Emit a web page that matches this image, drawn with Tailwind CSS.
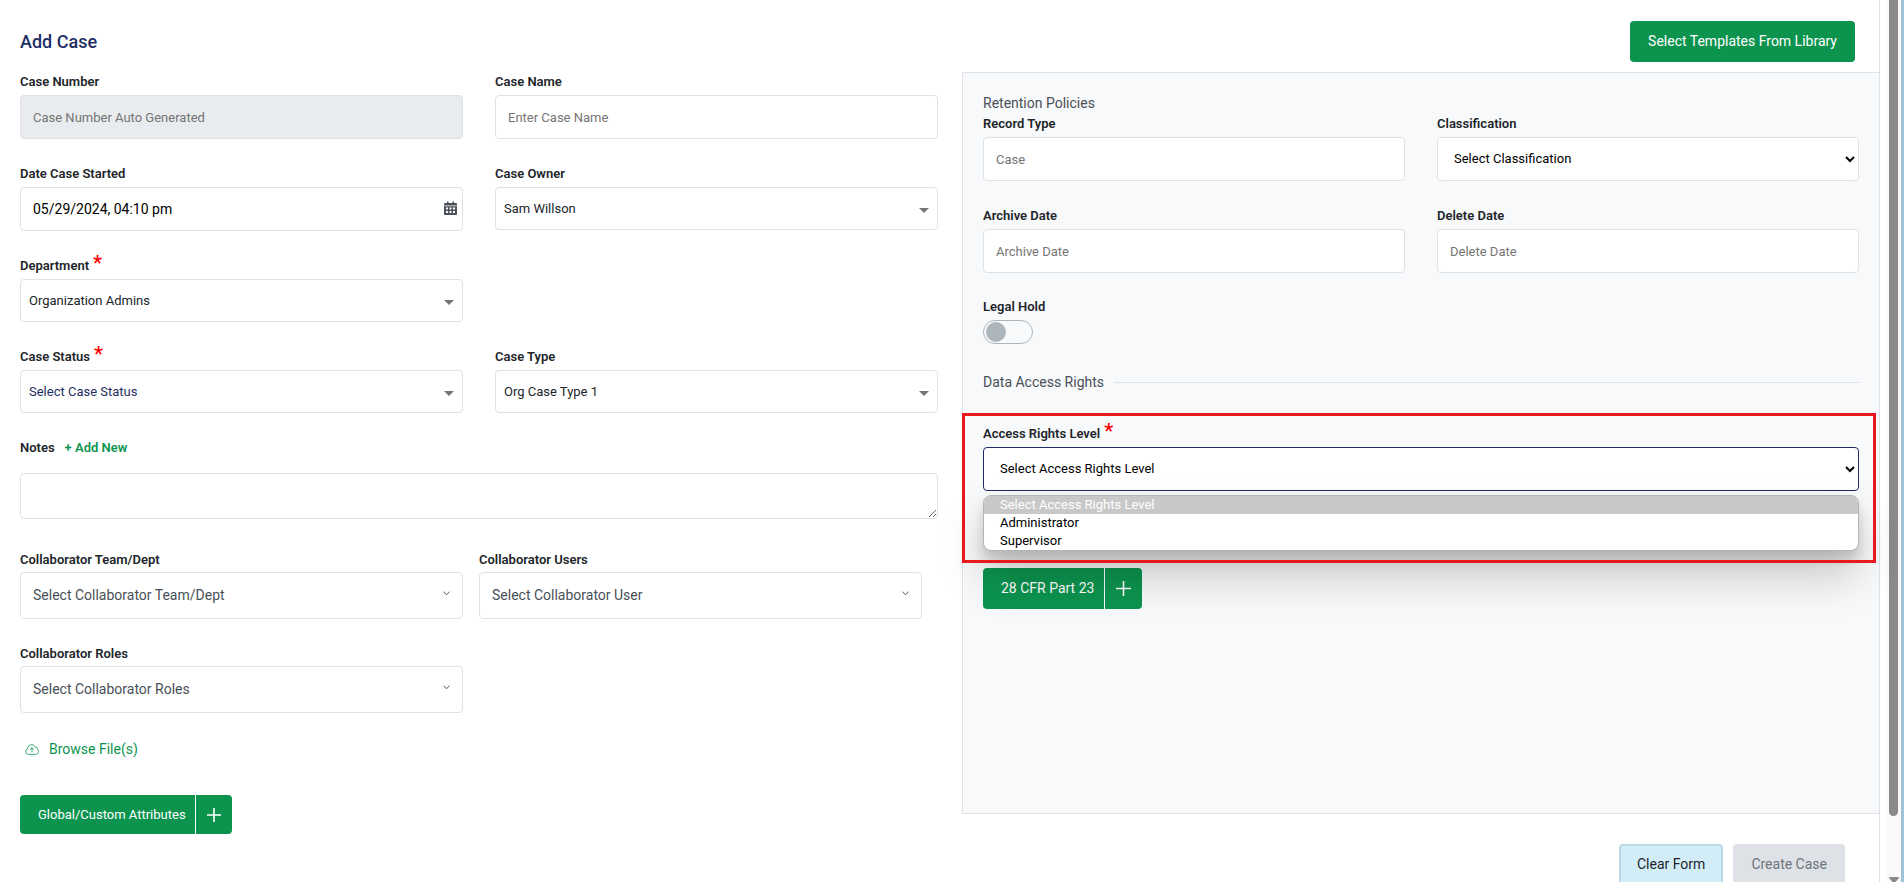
<!DOCTYPE html>
<html lang="en">
<head>
<meta charset="utf-8">
<title>Add Case</title>
<script src="https://cdn.jsdelivr.net/npm/@tailwindcss/browser@4"></script>
</head>
<body class="flex h-screen overflow-hidden bg-white font-[Roboto,'Open_Sans',sans-serif] text-[14px] text-[#212529]">
  <main class="min-w-0 flex-1">
    <header class="flex items-center justify-between pt-[21px] pr-6 pl-5">
      <h1 class="text-[18px] font-medium text-[#1f2f66]">Add Case</h1>
      <button type="button" class="h-[41px] rounded bg-[#0c944f] px-[18px] text-[14px] text-white">Select Templates From Library</button>
    </header>

    <form class="mt-2.5" onsubmit="return false">
      <div class="-mr-px grid grid-cols-2 items-start gap-6 pl-5">
        <div class="min-w-0">
          <div class="grid grid-cols-2 gap-x-8 gap-y-[25px]">
            <div>
              <label for="case-number" class="block pb-[3px] text-[13px] leading-[20px] font-semibold">Case Number</label>
              <input id="case-number" disabled placeholder="Case Number Auto Generated" class="block h-11 w-full rounded border border-[#dee2e6] bg-[#e9ecef] px-3 text-[13px] placeholder:text-[#757575]">
            </div>
            <div>
              <label for="case-name" class="block pb-[3px] text-[13px] leading-[20px] font-semibold">Case Name</label>
              <input id="case-name" placeholder="Enter Case Name" class="block h-11 w-full rounded border border-[#dee2e6] px-3 text-[13px] placeholder:text-[#757575]">
            </div>
            <div>
              <label for="date-started" class="block pb-[3px] text-[13px] leading-[20px] font-semibold">Date Case Started</label>
              <div class="relative">
                <input id="date-started" value="05/29/2024, 04:10 pm" class="block h-11 w-full rounded border border-[#dee2e6] px-3 text-black">
                <svg class="pointer-events-none absolute top-[14px] right-[6px] h-[14px] w-[13px]" viewBox="0 0 13 14" fill="#495057"><path d="M1 2h2V.5h1.500V2h4V.5H10V2h2a1 1 0 0 1 1 1v1.500H0V3a1 1 0 0 1 1-1z"/><path fill-rule="evenodd" d="M0 5.300h13V13a1 1 0 0 1-1 1H1a1 1 0 0 1-1-1zM2 6.500v2h2v-2zm3.500 0v2h2v-2zm3.500 0v2h2v-2zM2 10v2h2v-2zm3.500 0v2h2v-2zm3.500 0v2h2v-2z"/></svg>
              </div>
            </div>
            <div>
              <label for="case-owner" class="block pb-[3px] text-[13px] leading-[20px] font-semibold">Case Owner</label>
              <div class="relative">
                <select id="case-owner" class="block h-[43px] w-full appearance-none rounded border border-[#dee2e6] px-2 text-[13px]"><option>Sam Willson</option></select>
                <svg class="pointer-events-none absolute top-[21px] right-[9px] h-[5px] w-[10px]" viewBox="0 0 10 5" fill="#757575"><path d="M0 0h10L5 5z"/></svg>
              </div>
            </div>
            <div class="col-start-1">
              <label for="department" class="flex pb-[3px] text-[13px] leading-[20px] font-semibold">Department<span class="h-5 pl-1 text-[20px] leading-[14px] text-[#ff0000]">*</span></label>
              <div class="relative">
                <select id="department" class="block h-[43px] w-full appearance-none rounded border border-[#dee2e6] px-2 text-[13px]"><option>Organization Admins</option></select>
                <svg class="pointer-events-none absolute top-[21px] right-[9px] h-[5px] w-[10px]" viewBox="0 0 10 5" fill="#757575"><path d="M0 0h10L5 5z"/></svg>
              </div>
            </div>
            <div class="col-start-1">
              <label for="case-status" class="flex pb-[3px] text-[13px] leading-[20px] font-semibold">Case Status<span class="h-5 pl-1 text-[20px] leading-[14px] text-[#ff0000]">*</span></label>
              <div class="relative">
                <select id="case-status" class="block h-[43px] w-full appearance-none rounded border border-[#dee2e6] px-2 text-[13px] text-[#1f2f66]"><option>Select Case Status</option></select>
                <svg class="pointer-events-none absolute top-[21px] right-[9px] h-[5px] w-[10px]" viewBox="0 0 10 5" fill="#757575"><path d="M0 0h10L5 5z"/></svg>
              </div>
            </div>
            <div>
              <label for="case-type" class="block pb-[3px] text-[13px] leading-[20px] font-semibold">Case Type</label>
              <div class="relative">
                <select id="case-type" class="block h-[43px] w-full appearance-none rounded border border-[#dee2e6] px-2 text-[13px]"><option>Org Case Type 1</option></select>
                <svg class="pointer-events-none absolute top-[21px] right-[9px] h-[5px] w-[10px]" viewBox="0 0 10 5" fill="#757575"><path d="M0 0h10L5 5z"/></svg>
              </div>
            </div>
          </div>

          <div class="mt-6 flex items-center gap-2.5 text-[13px] leading-[22px] font-semibold">
            <label for="notes">Notes</label>
            <button type="button" class="text-[#0c944f]">+ Add New</button>
          </div>
          <textarea id="notes" class="mt-3.5 block h-[46px] w-full resize-y rounded border border-[#dee2e6] px-3 py-2"></textarea>

          <div class="mt-[30px] grid grid-cols-2 gap-x-4 gap-y-6 pr-4">
            <div>
              <label for="collab-team" class="block pb-px text-[13px] leading-[22px] font-semibold">Collaborator Team/Dept</label>
              <div class="relative">
                <select id="collab-team" class="block h-[47px] w-full appearance-none rounded border border-[#dee2e6] px-3 text-[14px] text-[#495057]"><option>Select Collaborator Team/Dept</option></select>
                <svg class="pointer-events-none absolute top-[19px] right-[13px] h-[5px] w-[7px]" viewBox="0 0 7 5" fill="none" stroke="#495057"><path d="M.4.600l3.100 3.200L6.600.600"/></svg>
              </div>
            </div>
            <div>
              <label for="collab-users" class="block pb-px text-[13px] leading-[22px] font-semibold">Collaborator Users</label>
              <div class="relative">
                <select id="collab-users" class="block h-[47px] w-full appearance-none rounded border border-[#dee2e6] px-3 text-[14px] text-[#495057]"><option>Select Collaborator User</option></select>
                <svg class="pointer-events-none absolute top-[19px] right-[13px] h-[5px] w-[7px]" viewBox="0 0 7 5" fill="none" stroke="#495057"><path d="M.4.600l3.100 3.200L6.600.600"/></svg>
              </div>
            </div>
            <div>
              <label for="collab-roles" class="block pb-px text-[13px] leading-[22px] font-semibold">Collaborator Roles</label>
              <div class="relative">
                <select id="collab-roles" class="block h-[47px] w-full appearance-none rounded border border-[#dee2e6] px-3 text-[14px] text-[#495057]"><option>Select Collaborator Roles</option></select>
                <svg class="pointer-events-none absolute top-[19px] right-[13px] h-[5px] w-[7px]" viewBox="0 0 7 5" fill="none" stroke="#495057"><path d="M.4.600l3.100 3.200L6.600.600"/></svg>
              </div>
            </div>
          </div>

          <button type="button" class="mt-[25px] flex items-center gap-2.5 pl-[5px] text-[14px] leading-[22px] text-[#0c944f]">
            <svg class="h-[11px] w-[14px]" viewBox="0 0 14 11" fill="none" stroke="#0c944f" stroke-width=".8" stroke-linecap="round" stroke-linejoin="round"><path d="M3.200 10.300a2.700 2.700 0 0 1-.6-5.300C2.600 2.600 4.300.700 6.600.700c1.700 0 3 .9 3.600 2.300 1.500 0 2.400 1 2.300 2.400.8.500 1.100 1.300 1.100 2.200 0 1.500-1 2.700-2.500 2.700z"/><path d="M7 8V4M5.300 5.500L7 3.800l1.700 1.700"/></svg>
            Browse File(s)
          </button>

          <div class="mt-[35px] flex h-[39px] gap-px text-white">
            <button type="button" class="rounded-l bg-[#0c944f] pr-[9px] pl-[18px] text-[13px]">Global/Custom Attributes</button>
            <button type="button" aria-label="Add attribute" class="flex w-9 items-center justify-center rounded-r bg-[#0c944f]"><svg class="size-[14px]" viewBox="0 0 14 14" stroke="#fff" stroke-width="1.600"><path d="M7 0v14M0 7h14"/></svg></button>
          </div>
        </div>

        <section class="relative min-w-0 border border-[#dee2e6] bg-[#f8f9fb] px-5 pt-5 pb-[204px]">
          <h2 class="text-[14px] leading-[21px] text-[#495057]">Retention Policies</h2>
          <div class="grid grid-cols-2 gap-x-8 gap-y-[25px]">
            <div>
              <label for="record-type" class="block pb-[3px] text-[13px] leading-[20px] font-semibold">Record Type</label>
              <input id="record-type" placeholder="Case" class="block h-11 w-full rounded border border-[#dee2e6] bg-white px-3 text-[13px] placeholder:text-[#757575]">
            </div>
            <div>
              <label for="classification" class="block pb-[3px] text-[13px] leading-[20px] font-semibold">Classification</label>
              <div class="relative">
                <select id="classification" class="block h-11 w-full appearance-none rounded border border-[#dee2e6] bg-white px-4 text-[13px] text-black"><option>Select Classification</option></select>
                <svg class="pointer-events-none absolute top-[19px] right-1 h-[7px] w-[10px]" viewBox="0 0 10 7" fill="none" stroke="#000" stroke-width="2"><path d="M1 1l4 4 4-4"/></svg>
              </div>
            </div>
            <div>
              <label for="archive-date" class="block pb-[3px] text-[13px] leading-[20px] font-semibold">Archive Date</label>
              <input id="archive-date" placeholder="Archive Date" class="block h-11 w-full rounded border border-[#dee2e6] bg-white px-3 text-[13px] placeholder:text-[#757575]">
            </div>
            <div>
              <label for="delete-date" class="block pb-[3px] text-[13px] leading-[20px] font-semibold">Delete Date</label>
              <input id="delete-date" placeholder="Delete Date" class="block h-11 w-full rounded border border-[#dee2e6] bg-white px-3 text-[13px] placeholder:text-[#757575]">
            </div>
          </div>

          <div class="mt-6">
            <label for="legal-hold" class="block pb-[3px] text-[13px] leading-[20px] font-semibold">Legal Hold</label>
            <input id="legal-hold" type="checkbox" role="switch" class="flex h-6 w-[50px] appearance-none items-center rounded-full border border-[#adb5bd] px-0.5 before:block before:size-5 before:rounded-full before:bg-[#adb5bd] checked:justify-end">
          </div>

          <div class="mt-7 flex items-center gap-2.5">
            <h2 class="text-[14px] leading-[21px] text-[#495057]">Data Access Rights</h2>
            <hr class="flex-1 border-[#dee2e6]">
          </div>

          <div class="relative mt-[31px]">
            <label for="access-level" class="flex pb-[3px] text-[13px] leading-[20px] font-semibold">Access Rights Level<span class="h-5 pl-1 text-[20px] leading-[14px] text-[#ff0000]">*</span></label>
            <div class="relative">
              <select id="access-level" class="block h-11 w-full appearance-none rounded border border-[#1f2a66] bg-white px-4 text-[13px] text-black"><option>Select Access Rights Level</option><option>Administrator</option><option>Supervisor</option></select>
              <svg class="pointer-events-none absolute top-[19px] right-1 h-[7px] w-[10px]" viewBox="0 0 10 7" fill="none" stroke="#000" stroke-width="2"><path d="M1 1l4 4 4-4"/></svg>
              <!-- open option list -->
              <ul role="listbox" aria-label="Access Rights Level" class="absolute inset-x-0 top-12 z-10 overflow-hidden rounded-lg border border-[#b4b4b4] bg-white text-[13px] leading-[18px] text-black shadow-[0_8px_12px_rgba(0,0,0,0.15),0_25px_45px_rgba(0,0,0,0.2)]">
                <li role="option" aria-selected="true" class="bg-[#c8c8c8] px-4 text-white">Select Access Rights Level</li>
                <li role="option" aria-selected="false" class="px-4">Administrator</li>
                <li role="option" aria-selected="false" class="px-4">Supervisor</li>
              </ul>
            </div>
            <!-- highlight frame -->
            <div class="pointer-events-none absolute -top-[11px] -right-[17px] -bottom-[72px] -left-[21px] z-20 border-3 border-[#e8191c]"></div>
          </div>

          <div class="mt-[77px] flex h-[41px] gap-px text-white">
            <button type="button" class="rounded-l bg-[#0c944f] pr-[10px] pl-[18px] text-[14px]">28 CFR Part 23</button>
            <button type="button" aria-label="Add 28 CFR Part 23" class="flex w-[37px] items-center justify-center rounded-r bg-[#0c944f]"><svg class="size-[15px]" viewBox="0 0 15 15" stroke="#fff" stroke-width="1.600"><path d="M7.500 0v15M0 7.500h15"/></svg></button>
          </div>
        </section>
      </div>

      <div class="mt-2.5 flex justify-end gap-2.5 pr-[34px] text-[14px]">
        <button type="button" class="h-[41px] rounded border-2 border-[#bcdae6] bg-[#d3edf8] px-4">Clear Form</button>
        <button type="submit" disabled class="h-[41px] rounded bg-[#dee2e6] px-[18px] text-[#6c757d]">Create Case</button>
      </div>
    </form>
  </main>

  <aside aria-hidden="true" class="flex w-[25px] shrink-0 border-l border-[#dee2e6]">
    <div class="ml-1.5 flex flex-1 flex-col items-center justify-between bg-[#fafafa]">
      <div class="h-[816px] w-[9px] rounded-b-full bg-[#8a8a8a]"></div>
      <svg class="h-[5px] w-[10px]" viewBox="0 0 10 5" fill="#8a8a8a"><path d="M0 1a1 1 0 0 1 1-1h8a1 1 0 0 1 1 1L6.500 5h-3z"/></svg>
    </div>
    <div class="w-[3px] bg-[#9fc2d8]"></div>
  </aside>
</body>
</html>
